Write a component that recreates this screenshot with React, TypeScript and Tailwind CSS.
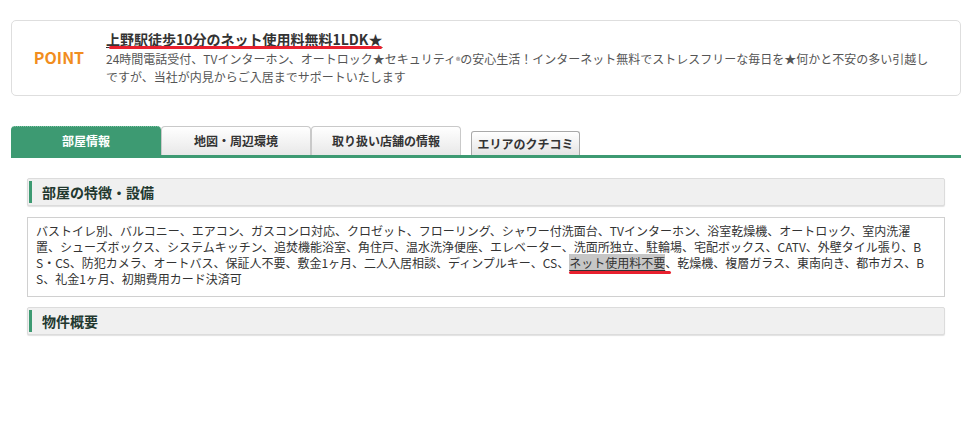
const jp = "font-['Noto_Sans_CJK_JP','Noto_Sans',sans-serif]";

const tabs = ["部屋情報", "地図・周辺環境", "取り扱い店舗の情報"];

const SectionHeading = ({ title }: { title: string }) => (
  <div className="flex h-[28px] items-center rounded-[2px] border border-[#dcdcdc] bg-[#f0f0f0] pl-[1px] shadow-[0_1px_1px_rgba(0,0,0,0.12)]">
    <div className="h-[22px] w-[3px] bg-[#3d9a72]" />
    <h3 className="ml-[10px] text-[14px] font-bold text-[#22382f]">{title}</h3>
  </div>
);

const App = () => {
  return (
    <div className={`${jp} min-h-[439px] bg-white pt-[20px] pl-[11px] text-[#333]`}>
      <div className="flex w-[950px] items-center rounded-[5px] border border-[#dedede] pt-[8px] pb-[10px]">
        <div className="w-[94px] shrink-0 text-center text-[16px] font-bold text-[#f18d1e]">POINT</div>
        <div className="pr-[14px]">
          <p className="text-[14px] leading-[20px] font-bold">
            <span className="relative underline decoration-[#333] underline-offset-[2px]">
              上野駅徒歩10分のネット使用料無料1LDK★
              <span className="absolute left-[3px] right-0 top-[17px] h-[3px] rounded-full bg-[#e8202e]" />
            </span>
          </p>
          <p className="mt-[2px] whitespace-nowrap text-[12px] leading-[16px] text-[#555]">
            24時間電話受付、TVインターホン、オートロック★セキュリティ<span className="text-[9px]">®</span>の安心生活！インターネット無料でストレスフリーな毎日を★何かと不安の多い引越し
            <br />
            ですが、当社が内見からご入居までサポートいたします
          </p>
        </div>
      </div>

      <div className="mt-[30px] flex w-[950px] items-end border-b-[3px] border-[#3d9a72]">
        {tabs.map((t, i) =>
          i === 0 ? (
            <div
              key={t}
              className="flex h-[29px] w-[150px] items-center justify-center rounded-t-[4px] border-t border-dotted border-[#7cc3a3] bg-[#3d9a72] text-[12px] font-bold text-white"
            >
              {t}
            </div>
          ) : (
            <div
              key={t}
              className="flex h-[29px] w-[150px] items-center justify-center rounded-t-[4px] border border-b-0 border-[#c9c9c9] bg-gradient-to-b from-white to-[#e8e8e8] text-[12px] font-bold text-[#333]"
            >
              {t}
            </div>
          )
        )}
        <div className="ml-[10px] flex h-[24px] w-[109px] items-center justify-center rounded-t-[3px] border border-b-0 border-[#a9a9a9] bg-gradient-to-b from-white to-[#e4e4e4] text-[12px] font-bold text-[#333]">
          エリアのクチコミ
        </div>
      </div>

      <div className="mt-[20px] ml-[16px] w-[918px]">
        <SectionHeading title="部屋の特徴・設備" />
        <div className="mt-[11px] h-[80px] whitespace-nowrap border border-[#d0d0d0] px-[8px] pt-[5px] text-[12px] leading-[16px] text-[#333]">
          バストイレ別、バルコニー、エアコン、ガスコンロ対応、クロゼット、フローリング、シャワー付洗面台、TVインターホン、浴室乾燥機、オートロック、室内洗濯
          <br />
          置、シューズボックス、システムキッチン、追焚機能浴室、角住戸、温水洗浄便座、エレベーター、<span className="underline underline-offset-[2px]">洗面所独立</span>、駐輪場、宅配ボックス、CATV、外壁タイル張り、B
          <br />
          S・CS、防犯カメラ、オートバス、保証人不要、敷金1ヶ月、二人入居相談、ディンプルキー、CS、
          <span className="relative bg-[#c6c6c6] underline underline-offset-[2px]">
            ネット使用料不要
            <span className="absolute left-0 right-[-6px] top-[17px] h-[3px] rounded-full bg-[#e8202e]" />
          </span>
          、乾燥機、複層ガラス、東南向き、都市ガス、B
          <br />
          S、礼金1ヶ月、初期費用カード決済可
        </div>
        <div className="mt-[10px]">
          <SectionHeading title="物件概要" />
        </div>
      </div>
    </div>
  );
};

export default App;
